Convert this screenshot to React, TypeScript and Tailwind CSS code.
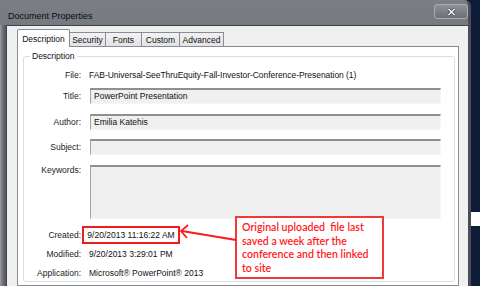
import React from 'react';

const ui = "font-['Liberation_Sans',Arial,sans-serif]";

function Field({ label, value, tall }: { label: string; value?: string; tall?: boolean }) {
  return (
    <div className="flex items-start">
      <div className={`w-[57px] shrink-0 text-right text-[#222] leading-[14px] ${tall ? 'mt-[-2px]' : 'mt-[1px]'}`}>{label}</div>
      <div
        className={`ml-[9px] w-[351px] bg-[#f0f0f0] border-t-2 border-l border-t-[#8f8f8f] border-l-[#a3a3a3] border-r border-b border-r-[#f6f6f6] border-b-[#f6f6f6] pl-[3px] leading-[13px] text-[#111] ${tall ? 'h-[54px]' : 'h-[16px]'}`}
      >
        {value}
      </div>
    </div>
  );
}

function InfoRow({ label, children }: { label: string; children: React.ReactNode }) {
  return (
    <div className="flex items-center">
      <div className="w-[57px] shrink-0 text-right text-[#222] leading-[14px]">{label}</div>
      <div className="ml-[7px] text-[#111] leading-[14px]">{children}</div>
    </div>
  );
}

export default function App() {
  const tabs = ['Security', 'Fonts', 'Custom', 'Advanced'];
  const tabW = ['w-[36px]', 'w-[36px]', 'w-[38px]', 'w-[44px]'];

  return (
    <div className={`relative w-[480px] h-[286px] overflow-hidden bg-[#0e1c38] text-[8.5px] ${ui}`}>
      <div className="flex h-full">
        {/* window */}
        <div className="w-[471px] h-full rounded-tr-[6px] bg-gradient-to-b from-[#7b7e84] via-[#62656c] to-[#5b5f68] border-r-[3px] border-[#4a4d55] flex flex-col">
          {/* title bar */}
          <div className="h-[25px] shrink-0 flex items-start relative">
            <span className="ml-[8px] mt-[10px] text-[9px] leading-[12px] text-[#0c0c0c]">Document Properties</span>
            <div className="absolute right-[0px] top-[4px] w-[34px] h-[15px] rounded-[3px] border border-[#a9acb2] bg-gradient-to-b from-[#8d9096] to-[#6d7077] flex items-center justify-center">
              <svg width="9" height="8" viewBox="0 0 9 8">
                <path d="M1.5 1 L7.5 7 M7.5 1 L1.5 7" stroke="#3a3d44" strokeWidth="2.6" />
                <path d="M1.5 1 L7.5 7 M7.5 1 L1.5 7" stroke="#ffffff" strokeWidth="1.4" />
              </svg>
            </div>
          </div>
          {/* client */}
          <div className="flex-1 flex">
            <div className="w-[6px] shrink-0 bg-gradient-to-r from-[#9a9da2] via-[#6a6d73] to-[#53565d]" />
            <div className="flex-1 bg-[#f0f0f0] border-l border-t border-[#3f424a] pt-[3px] pl-[10px] pr-[9px] flex flex-col">
              {/* tabs */}
              <div className="flex items-end h-[17px] relative z-10">
                <div className="w-[53px] h-[18px] bg-white border border-b-0 border-[#898c95] rounded-t-[2px] flex items-center justify-center leading-[12px] text-[#111] mb-[-1px]">
                  Description
                </div>
                {tabs.map((t, i) => (
                  <div
                    key={t}
                    className={`${tabW[i]} h-[14px] bg-gradient-to-b from-[#f2f2f2] to-[#e3e3e3] border border-b-0 border-l-0 border-[#898c95] flex items-center justify-center leading-[12px] text-[#111]`}
                  >
                    {t}
                  </div>
                ))}
              </div>
              {/* panel */}
              <div className="flex-1 bg-white border border-[#898c95] pt-[3px] pl-[5px] pr-[3px]">
                <fieldset className="border border-[#d5dfe5] rounded-[3px] h-[232px]">
                  <legend className="ml-[6px] px-[2px] leading-[12px] text-[#111]">Description</legend>
                  <div className="flex flex-col">
                    <div className="mt-[6px]">
                      <InfoRow label="File:">
                        <span className="ml-[1px] tracking-[-0.05px]">FAB-Universal-SeeThruEquity-Fall-Investor-Conference-Presenation (1)</span>
                      </InfoRow>
                    </div>
                    <div className="mt-[6px]">
                      <Field label="Title:" value="PowerPoint Presentation" />
                    </div>
                    <div className="mt-[10px]">
                      <Field label="Author:" value="Emilia Katehis" />
                    </div>
                    <div className="mt-[9px]">
                      <Field label="Subject:" />
                    </div>
                    <div className="mt-[10px]">
                      <Field label="Keywords:" tall />
                    </div>
                    <div className="mt-[7px]">
                      <InfoRow label="Created:">
                        <span className="-ml-[6px] flex items-center justify-center w-[98px] h-[18px] border-2 border-[#ee1c1c] whitespace-nowrap leading-[14px]">
                          9/20/2013 11:16:22 AM
                        </span>
                      </InfoRow>
                    </div>
                    <div className="mt-[3px]">
                      <InfoRow label="Modified:">
                        <span className="ml-[1px]">9/20/2013 3:29:01 PM</span>
                      </InfoRow>
                    </div>
                    <div className="mt-[5px]">
                      <InfoRow label="Application:">
                        <span className="ml-[1px]">Microsoft® PowerPoint® 2013</span>
                      </InfoRow>
                    </div>
                  </div>
                </fieldset>
              </div>
            </div>
          </div>
        </div>
        {/* desktop background strip */}
        <div className="flex-1 flex flex-col">
          <div className="h-[212px]" />
          <div className="h-[14px] bg-white" />
        </div>
      </div>

      {/* callout */}
      <div className="absolute left-[235px] top-[216px] w-[149px] h-[63px] bg-white border-2 border-[#f03a3a] pl-[5px] pt-[3px] font-['Lato',sans-serif] font-semibold text-[10.6px] leading-[13.7px] text-[#ff1a1a]">
        <div className="whitespace-nowrap">Original uploaded&nbsp; file last</div>
        <div className="whitespace-nowrap">saved a week after the</div>
        <div className="whitespace-nowrap">conference and then linked</div>
        <div className="whitespace-nowrap">to site</div>
      </div>
      <svg className="absolute left-0 top-0 pointer-events-none" width="480" height="286">
        <path d="M236 240 L182 231" stroke="#ff1a1a" strokeWidth="1.8" fill="none" />
        <path d="M188 225 L181 231 L187 238" stroke="#ff1a1a" strokeWidth="1.8" fill="none" />
      </svg>
    </div>
  );
}
